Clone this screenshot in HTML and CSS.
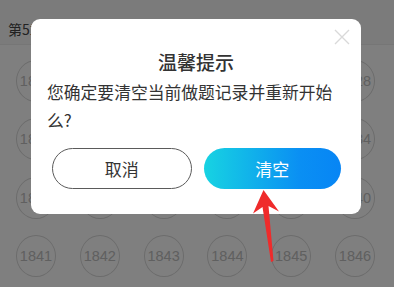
FILE: index.html
```html
<!DOCTYPE html>
<html lang="zh-CN">
<head>
<meta charset="utf-8">
<link rel="stylesheet" href="styles.css">
</head>
<body>
<div class="page">
  <div class="header">第5章 练习题</div>
  <div class="grid">
    <div class="num">1823</div><div class="num">1824</div><div class="num">1825</div><div class="num">1826</div><div class="num">1827</div><div class="num">1828</div>
    <div class="num">1829</div><div class="num">1830</div><div class="num">1831</div><div class="num">1832</div><div class="num">1833</div><div class="num">1834</div>
    <div class="num">1835</div><div class="num">1836</div><div class="num">1837</div><div class="num">1838</div><div class="num">1839</div><div class="num">1840</div>
    <div class="num">1841</div><div class="num">1842</div><div class="num">1843</div><div class="num">1844</div><div class="num">1845</div><div class="num">1846</div>
  </div>
</div>
<div class="mask">
  <div class="dialog">
    <svg class="close" width="16" height="16" viewBox="0 0 16 16"><path d="M1 1L15 15M15 1L1 15" stroke="#d9d9d9" stroke-width="1.4" fill="none"/></svg>
    <div class="title">温馨提示</div>
    <div class="msg">您确定要清空当前做题记录并重新开始么?</div>
    <div class="btns">
      <div class="btn cancel">取消</div>
      <div class="btn ok">清空</div>
    </div>
  </div>
  <svg class="arrow" width="394" height="287" viewBox="0 0 394 287"><path d="M263.5 190 L279 211.5 L268.5 206 L273.5 261 L271 262 L262.5 207 L253 213.5 Z" fill="#ef2b2b"/></svg>
</div>
</body>
</html>
```
FILE: styles.css
```css
html, body {
  margin: 0;
  padding: 0;
}
body {
  width: 394px;
  height: 287px;
  overflow: hidden;
  position: relative;
  background: #ffffff;
  font-family: "Noto Sans CJK SC", "Liberation Sans", sans-serif;
}
.page {
  width: 394px;
  height: 287px;
}
.header {
  height: 45px;
  box-sizing: border-box;
  background: #f6f6f6;
  border-bottom: 1px solid #ececec;
  padding: 19px 0 0 8px;
  font-size: 14px;
  line-height: 20px;
  color: #444;
  white-space: nowrap;
}
.grid {
  display: grid;
  grid-template-columns: repeat(6, 40px);
  column-gap: 23.8px;
  row-gap: 16.3px;
  padding: 15px 0 0 16px;
}
.num {
  width: 40px;
  height: 42px;
  box-sizing: border-box;
  border: 1px solid #d8d8d8;
  border-radius: 50%;
  display: flex;
  align-items: center;
  justify-content: center;
  font-family: "Liberation Sans", sans-serif;
  font-size: 14.5px;
  color: #c0c0c0;
}
.mask {
  position: absolute;
  inset: 0;
  background: rgba(0, 0, 0, 0.5);
  padding: 19px 0 0 31px;
  box-sizing: border-box;
}
.dialog {
  position: relative;
  width: 330px;
  height: 195px;
  box-sizing: border-box;
  background: #fff;
  border-radius: 9px;
  padding-top: 30px;
}
.close {
  position: absolute;
  right: 11px;
  top: 10px;
}
.title {
  text-align: center;
  font-size: 19px;
  line-height: 26px;
  font-weight: 500;
  color: #333;
}
.msg {
  margin-top: 4px;
  padding: 0 16px;
  font-size: 16.8px;
  line-height: 27.5px;
  color: #333;
}
.btns {
  display: flex;
  gap: 12px;
  padding: 0 20px 0 21px;
  margin-top: 14px;
}
.btn {
  flex: 1;
  height: 41px;
  box-sizing: border-box;
  border-radius: 21px;
  display: flex;
  align-items: center;
  justify-content: center;
  font-size: 17px;
}
.cancel {
  border: 1px solid #5a5a5a;
  color: #333;
}
.ok {
  background: linear-gradient(90deg, #17d3e2 0%, #0a8ff3 70%, #0785f5 100%);
  color: #fff;
}
.arrow {
  position: absolute;
  left: 0;
  top: 0;
}
```
